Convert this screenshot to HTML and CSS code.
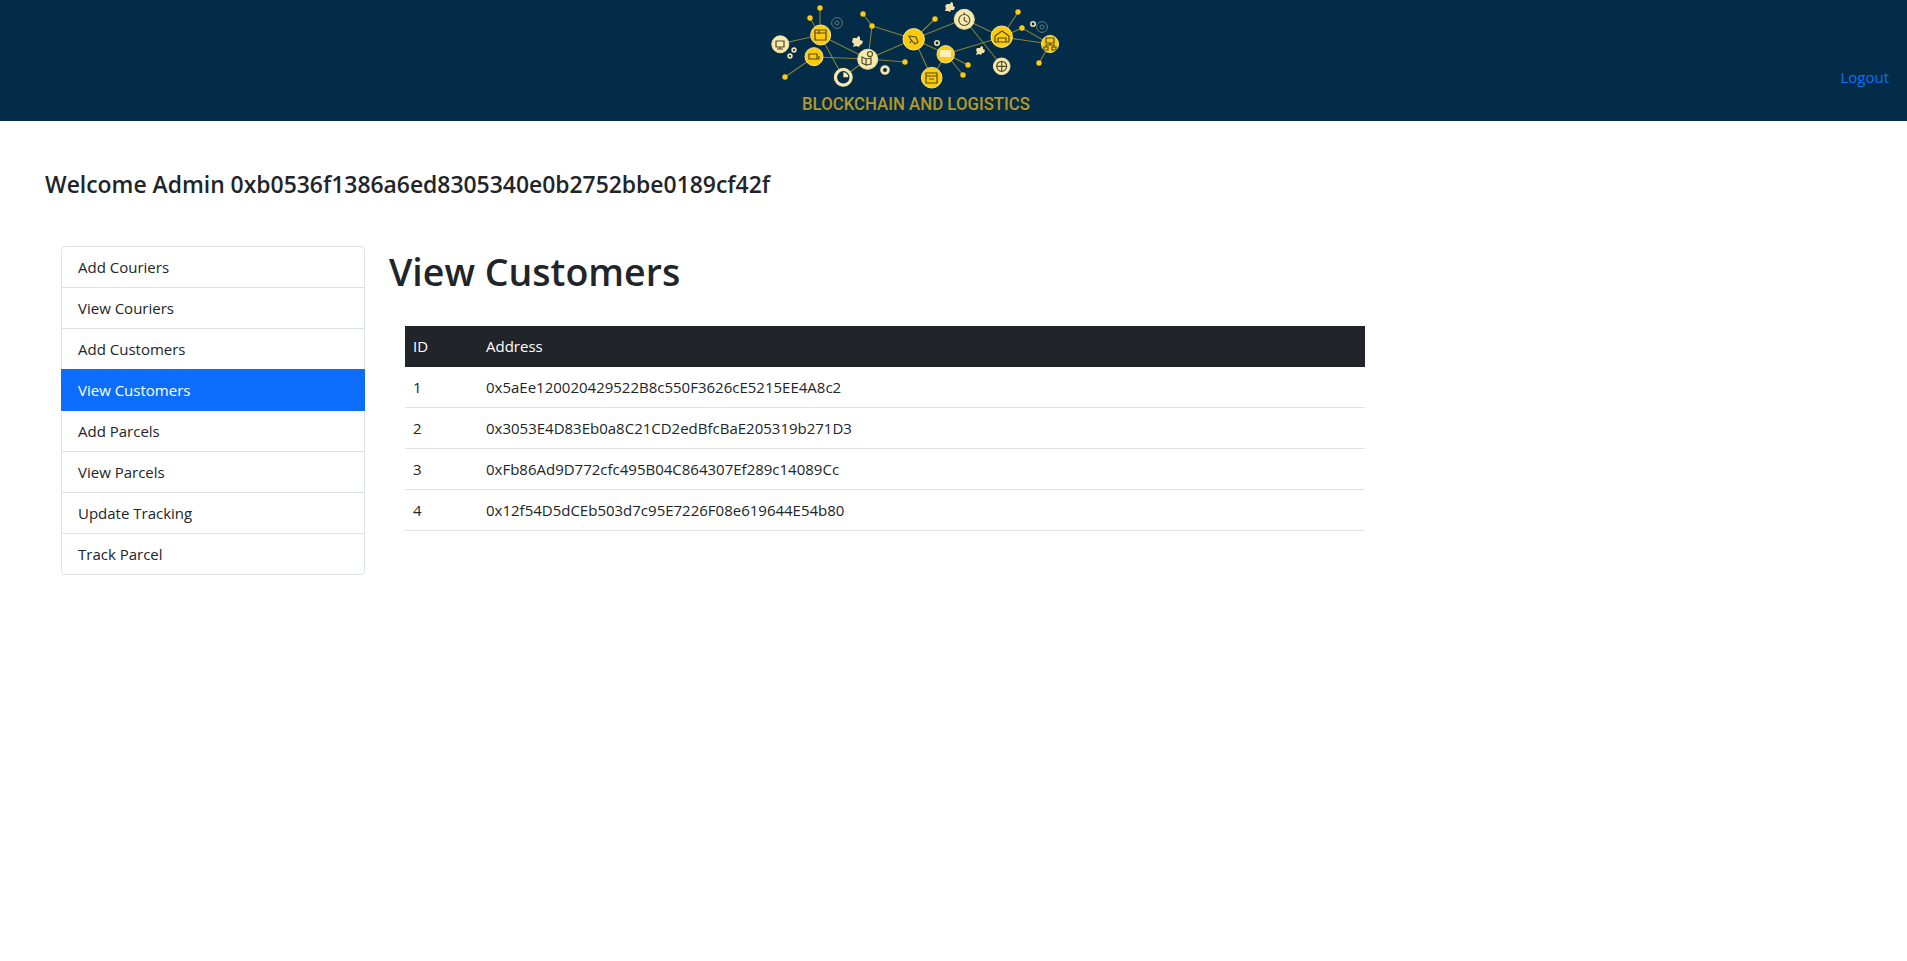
FILE: index.html
```html
<!DOCTYPE html>
<html lang="en">
<head>
  <meta charset="UTF-8">
  <meta name="viewport" content="width=device-width, initial-scale=1.0">
  <title>View Customers</title>
  <link rel="stylesheet" href="styles.css">
</head>
<body>

<header class="top-bar">
  <svg class="logo" width="340" height="121" viewBox="0 0 340 121">
    <g class="logo-art">
      <!-- links -->
      <g class="links">
        <path d="M80 8V35M70 18L80 35M40 44L80 35M45 77L74 57M74 57L128 59M80 35L128 59M80 35L103 77M103 77L128 59"/>
        <path d="M123 14L132 26L128 59M132 26L174 39M128 59L174 39M128 59L165 62M174 39L195 19M174 39L224 19M174 39L206 54M174 39L192 78"/>
        <path d="M206 54L192 78M206 54L228 65M206 54L223 75M206 54L262 37M224 19L262 37M224 19L262 66"/>
        <path d="M262 37L278 12M262 37L282 28L310 44M262 37L310 44M310 44L299 63"/>
      </g>
      <!-- small dots -->
      <g class="dots">
        <circle cx="80" cy="8" r="2.7"/><circle cx="70" cy="18" r="2.7"/><circle cx="45" cy="77" r="2.7"/>
        <circle cx="123" cy="14" r="2.7"/><circle cx="132" cy="26" r="2.7"/><circle cx="165" cy="62" r="2.7"/>
        <circle cx="195" cy="19" r="2.7"/><circle cx="228" cy="65" r="2.7"/><circle cx="223" cy="75" r="2.7"/>
        <circle cx="278" cy="12" r="2.7"/><circle cx="282" cy="28" r="2.7"/><circle cx="299" cy="63" r="2.7"/>
      </g>
      <!-- gears and rings -->
      <g class="rings">
        <circle cx="97" cy="23" r="5.4"/><circle cx="97" cy="23" r="2"/>
        <circle cx="302" cy="27" r="5.4"/><circle cx="302" cy="27" r="2"/>
      </g>
      <g class="gears">
        <circle cx="50" cy="56" r="1.9"/><circle cx="54" cy="50" r="1.9"/>
        <circle class="gear-big" cx="145" cy="70" r="3.4"/><circle cx="197" cy="43" r="2.2"/><circle cx="293" cy="24" r="2.2"/>
      </g>
      <g class="pieces">
        <path d="M113 38h4l1-2 2 1v3l3 1-1 3-2 1-1 2-3-1-3 1 1-3-2-2z"/>
        <path d="M207 4h3l1-2 2 1v3l2 1-1 3-3 0-1 2-2-1-3 0 1-3-1-2z"/>
        <path d="M237 48h3l1-2 2 1v2l2 1-1 3-2 0-1 2-2-1-3 1 1-3-1-2z"/>
      </g>
      <!-- nodes -->
      <g class="node-yellow">
        <circle cx="80.7" cy="35" r="10"/><circle cx="74" cy="56.7" r="9"/><circle cx="173.7" cy="39.3" r="10.7"/>
        <circle cx="205.7" cy="54.3" r="8.7"/><circle cx="191.7" cy="77.7" r="10.3"/><circle cx="261.7" cy="36.7" r="10.7"/>
        <circle cx="310" cy="44" r="8.5"/>
      </g>
      <g class="node-cream">
        <circle cx="40.3" cy="44.3" r="8.5"/><circle cx="127.7" cy="59.3" r="10"/><circle cx="103.3" cy="77.3" r="9"/>
        <circle cx="224.3" cy="19.3" r="10"/><circle cx="261.7" cy="66.3" r="8.3"/>
      </g>
      <circle class="node-hole" cx="103.3" cy="77.3" r="6.2"/>
      <path class="pie" d="M103.300 77.300v-5a5 5 0 0 1 5 5z"/>
      <!-- node pictures -->
      <g class="glyphs">
        <path d="M75 30h11v10h-11zM75 33h11M79 30v4"/>
        <path d="M69 54h8v5h-8zM73 59h6v-3"/>
        <path d="M36 41h8v6h-8zM40 47v2M37 49h6"/>
        <path d="M122 57l4 2v6l-4-2zM126 59l5-1v6l-5 1z"/>
        <circle cx="130" cy="54" r="2.5"/>
        <path d="M169 36l7 1 2 5-3 2-4-4zM172 40l-2 3"/>
        <path d="M186 73h11v10h-11zM186 76h11M189 79h5"/>
        <path d="M255 42v-6l7-5 7 5v6zM258 42v-4h8v4"/>
        <path d="M306 43h8v-5h-8zM304 50h4v-3h-4zM312 50h4v-3h-4zM310 43v2M306 47v-2h8v2"/>
        <circle cx="224.300" cy="20" r="5.500"/>
        <path d="M224.300 12.500v2M224.300 17v3.500l3 1.500"/>
        <circle cx="261.700" cy="66.300" r="5"/>
        <path d="M256.700 66.300h10M261.700 61.300v10"/>
      </g>
      <path class="glyph-light" d="M200 50h11v7h-11z"/>
    </g>
    <text class="logo-text" x="62" y="110" textLength="228" lengthAdjust="spacingAndGlyphs">BLOCKCHAIN AND LOGISTICS</text>
  </svg>
  <a class="logout" href="#">Logout</a>
</header>

<h4 class="welcome">Welcome Admin 0xb0536f1386a6ed8305340e0b2752bbe0189cf42f</h4>

<div class="page-row">
  <nav class="side-menu">
    <a class="side-item" href="#">Add Couriers</a>
    <a class="side-item" href="#">View Couriers</a>
    <a class="side-item" href="#">Add Customers</a>
    <a class="side-item active" href="#">View Customers</a>
    <a class="side-item" href="#">Add Parcels</a>
    <a class="side-item" href="#">View Parcels</a>
    <a class="side-item" href="#">Update Tracking</a>
    <a class="side-item" href="#">Track Parcel</a>
  </nav>

  <main class="content">
    <h1 class="page-title">View Customers</h1>
    <table class="data-table">
      <thead>
        <tr>
          <th class="id-col">ID</th>
          <th>Address</th>
        </tr>
      </thead>
      <tbody>
        <tr><td>1</td><td>0x5aEe120020429522B8c550F3626cE5215EE4A8c2</td></tr>
        <tr><td>2</td><td>0x3053E4D83Eb0a8C21CD2edBfcBaE205319b271D3</td></tr>
        <tr><td>3</td><td>0xFb86Ad9D772cfc495B04C864307Ef289c14089Cc</td></tr>
        <tr><td>4</td><td>0x12f54D5dCEb503d7c95E7226F08e619644E54b80</td></tr>
      </tbody>
    </table>
  </main>
</div>

</body>
</html>
```

FILE: styles.css
```css
body, html {
  margin: 0;
  padding: 0;
  background: #fff;
  color: #212529;
  font-family: "Open Sans", "Noto Sans", Arial, sans-serif;
  font-size: 15px;
  line-height: 24px;
}

.top-bar {
  display: flex;
  justify-content: space-between;
  align-items: flex-end;
  height: 121px;
  padding: 0 18px 0 740px;
  background-color: #032c48;
}

.logo {
  display: block;
}

.logo-art {
  filter: blur(0.35px);
}

.links {
  fill: none;
  stroke: #85823a;
  stroke-width: 1.1;
}

.dots, .node-yellow {
  fill: #fdcb0a;
}

.node-yellow, .node-cream {
  stroke: #f3e3a0;
  stroke-width: 1;
}

.node-cream {
  fill: #f7e9b0;
}

.node-hole {
  fill: #032c48;
}

.pie {
  fill: #f7e9b0;
}

.rings {
  fill: none;
  stroke: #5f7a80;
  stroke-width: 1;
}

.pieces {
  fill: #f3e3a8;
}

.gears {
  fill: none;
  stroke: #f3e3a8;
  stroke-width: 1.6;
}

.gears .gear-big {
  stroke-width: 2.8;
}

.glyphs {
  fill: none;
  stroke: #4f4d28;
  stroke-width: 1.2;
}

.glyph-light {
  fill: #fbeeb8;
}

.logo-text {
  fill: #b39a2b;
  font-family: Roboto, "Liberation Sans", sans-serif;
  font-size: 17.5px;
  font-weight: 500;
}

.logout {
  margin-bottom: 32px;
  color: #0d6efd;
  text-decoration: none;
}

.welcome {
  margin: 0;
  padding: 49px 0 0 45px;
  font-size: 22.9px;
  font-weight: 600;
  line-height: 29px;
}

.page-row {
  display: flex;
  gap: 24px;
  margin-top: 47px;
  padding-left: 61px;
}

.side-menu {
  display: flex;
  flex-direction: column;
  flex: none;
  align-self: flex-start;
  width: 304px;
  border: 1px solid #dee2e6;
  border-radius: 4px;
  box-sizing: border-box;
}

.side-item {
  padding: 8px 16px;
  color: #212529;
  text-decoration: none;
  border-bottom: 1px solid #dee2e6;
}

.side-item:last-child {
  border-bottom: none;
}

.side-item.active {
  margin: -1px -1px 0;
  padding: 9px 17px;
  background-color: #0d6efd;
  color: #fff;
  border-bottom: none;
}

.content {
  flex: none;
  width: 976px;
}

.page-title {
  margin: 2px 0 30px;
  font-size: 37.5px;
  font-weight: 600;
  line-height: 48px;
}

.data-table {
  width: 960px;
  margin-left: 16px;
  border-collapse: collapse;
}

.data-table th, .data-table td {
  padding: 8px;
  text-align: left;
  font-weight: 400;
  border-bottom: 1px solid #dee2e6;
}

.data-table th {
  background-color: #212529;
  color: #fff;
  border-bottom-color: #212529;
}

.id-col {
  width: 57px;
}
```
